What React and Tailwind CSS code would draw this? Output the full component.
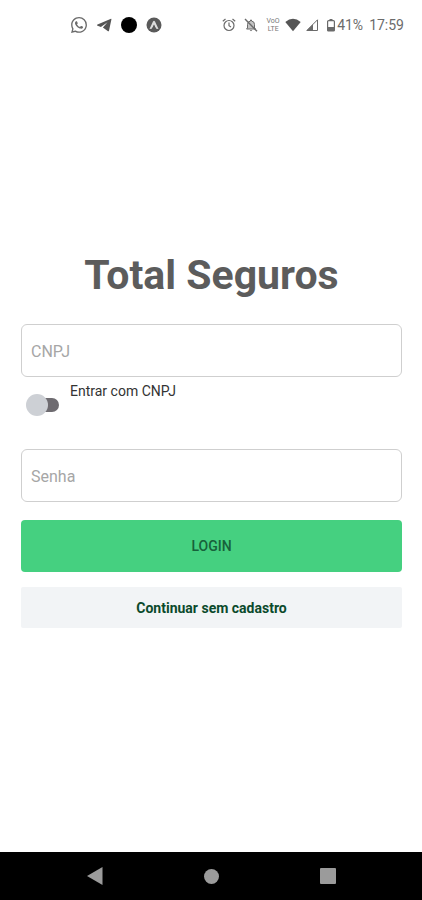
import { useState } from "react";

function StatusBar() {
  return (
    <header className="flex h-12 items-center justify-between pt-0.5 pr-[18px] pl-[71px] text-[#6b6b6b]">
      <div className="flex items-center gap-[9px]">
        <svg className="size-4" viewBox="0 0 24 24" fill="currentColor" aria-label="WhatsApp">
          <path d="M17.472 14.382c-.297-.149-1.758-.867-2.03-.967-.273-.099-.471-.148-.67.15-.197.297-.767.966-.94 1.164-.173.199-.347.223-.644.075-.297-.15-1.255-.463-2.39-1.475-.883-.788-1.48-1.761-1.653-2.059-.173-.297-.018-.458.13-.606.134-.133.298-.347.446-.52.149-.174.198-.298.298-.497.099-.198.05-.371-.025-.52-.075-.149-.669-1.612-.916-2.207-.242-.579-.487-.5-.669-.51-.173-.008-.371-.01-.57-.01-.198 0-.52.074-.792.372-.272.297-1.04 1.016-1.04 2.479 0 1.462 1.065 2.875 1.213 3.074.149.198 2.096 3.2 5.077 4.487.709.306 1.262.489 1.694.625.712.227 1.36.195 1.871.118.571-.085 1.758-.719 2.006-1.413.248-.694.248-1.289.173-1.413-.074-.124-.272-.198-.57-.347m-5.421 7.403h-.004a9.87 9.87 0 01-5.031-1.378l-.361-.214-3.741.982.998-3.648-.235-.374a9.86 9.86 0 01-1.51-5.26c.001-5.45 4.436-9.884 9.888-9.884a9.83 9.83 0 019.884 9.892c-.003 5.45-4.437 9.884-9.888 9.884m8.413-18.297A11.815 11.815 0 0012.05 0C5.495 0 .16 5.335.157 11.892c0 2.096.547 4.142 1.588 5.945L.057 24l6.305-1.654a11.882 11.882 0 005.683 1.448h.005c6.554 0 11.89-5.335 11.893-11.893a11.821 11.821 0 00-3.48-8.413z" />
        </svg>
        <svg className="size-4" viewBox="0 0 16 16" fill="#555" aria-label="Telegram">
          <path d="M15 1.800 1.500 7.600c-.7.300-.6.900.1 1.200l3.300 1.100L11.500 5.300 6.900 10.500 12 14.200c.5.300.9.100 1-.5L15.400 2.400c.1-.5-.1-.7-.4-.6Z" />
        </svg>
        <span className="size-4 rounded-full bg-black" />
        <svg className="size-4" viewBox="0 0 16 16" aria-label="App">
          <circle cx="8" cy="8" r="7.500" fill="#5a5a5a" />
          <path d="M3.500 12 7 4.500Q8 3 9 4.500L12.500 12 10.300 11.800 8 8 5.700 11.800Z" fill="#ddd" />
          <path d="M8 7.300 9.700 12H6.300Z" fill="#5a5a5a" />
        </svg>
      </div>
      <div className="flex items-center">
        <svg className="mr-1.5 size-4" viewBox="0 0 16 16" fill="none" stroke="currentColor" strokeWidth="1.200" aria-label="Alarme">
          <circle cx="8" cy="8.500" r="5" />
          <path d="M8 5.500v3.200l2 1.300M1.800 4.200 4.500 2M14.200 4.200 11.500 2" />
        </svg>
        <svg className="mr-1.5 size-4" viewBox="0 0 16 16" aria-label="Silencioso">
          <path d="M4.500 11V7.500a3.500 3.500 0 0 1 3-3.500V3h1v1a3.500 3.500 0 0 1 3 3.500V11l1 1h-9Z" fill="currentColor" fillOpacity="0.400" stroke="currentColor" />
          <path d="M6.700 13h2.600L8 14.300Z" fill="currentColor" />
          <path d="m2 2 12 12.300" stroke="currentColor" strokeWidth="1.400" />
        </svg>
        <span className="mr-1 flex w-4 flex-col items-center text-[7px] leading-[8px] text-[#777]">
          <span>VoO</span>
          <span>LTE</span>
        </span>
        <svg className="mr-1 size-4" viewBox="0 0 16 16" aria-label="Wi-Fi">
          <path d="M.3 5Q8-1.700 15.700 5L8 14.300Z" fill="#555" />
        </svg>
        <svg className="mr-[7px] size-3.5" viewBox="0 0 14 14" aria-label="Sinal">
          <path d="M12.500 1.800v10.700H1.800Z" fill="none" stroke="currentColor" />
          <path d="M8 6.300v6.200H1.800Z" fill="currentColor" />
        </svg>
        <svg className="mr-px h-3.5 w-2.5" viewBox="0 0 10 14" aria-label="Bateria">
          <path d="M3.500 1h3v1.500h-3Z" fill="currentColor" />
          <rect x="1.600" y="2.600" width="6.800" height="10.400" rx="1" fill="none" stroke="currentColor" strokeWidth="1.200" />
          <path d="M1.500 9h7v4h-7Z" fill="currentColor" />
        </svg>
        <span className="mr-1.5 text-sm">41%</span>
        <time className="text-sm">17:59</time>
      </div>
    </header>
  );
}

function Field({ label, type, value, onChange }) {
  return (
    <input
      type={type}
      aria-label={label}
      placeholder={label}
      value={value}
      onChange={(event) => onChange(event.target.value)}
      className="h-[53px] w-full rounded-md border border-[#cfcfcf] bg-white px-[9px] pt-0.5 text-base text-[#333] outline-none placeholder:text-[#a6a6a6]"
    />
  );
}

function NavigationBar() {
  return (
    <nav className="flex h-12 items-center justify-around bg-black px-9 text-[#9b9b9b]">
      <button type="button" aria-label="Voltar">
        <svg className="size-[18px]" viewBox="0 0 18 18" fill="currentColor">
          <path d="M16.500 0v18L1 9Z" />
        </svg>
      </button>
      <button type="button" aria-label="Início">
        <span className="block size-[15px] rounded-full bg-[#9b9b9b]" />
      </button>
      <button type="button" aria-label="Recentes">
        <span className="block size-4 rounded-[1px] bg-[#9b9b9b]" />
      </button>
    </nav>
  );
}

export default function App() {
  const [document, setDocument] = useState("");
  const [password, setPassword] = useState("");
  const [useCnpj, setUseCnpj] = useState(false);

  return (
    <div className="flex min-h-screen flex-col bg-white font-['Roboto',sans-serif]">
      <StatusBar />
      <main className="grow pt-[202px] pr-5 pl-[21px]">
        <form onSubmit={(event) => event.preventDefault()}>
          <h1 className="mb-6 text-center text-[41px] leading-[50px] font-bold text-[#5c5c5c]">Total Seguros</h1>
          <Field label="CNPJ" type="text" value={document} onChange={setDocument} />
          <div className="flex h-18 items-start pt-1 pl-[5px]">
            <input
              id="use-cnpj"
              type="checkbox"
              role="switch"
              checked={useCnpj}
              onChange={(event) => setUseCnpj(event.target.checked)}
              className="relative mt-[17px] h-3.5 w-[33px] appearance-none rounded-full bg-[#6e6b70] bg-clip-content pl-2 before:absolute before:-top-1 before:left-0 before:size-[22px] before:rounded-full before:bg-[#cdd0d5] checked:before:left-3"
            />
            <label htmlFor="use-cnpj" className="ml-[11px] text-sm leading-5 text-[#333]">
              Entrar com CNPJ
            </label>
          </div>
          <Field label="Senha" type="password" value={password} onChange={setPassword} />
          <button type="submit" className="mt-[18px] block h-13 w-full rounded bg-[#45d080] text-sm font-medium text-[#17613a]">
            LOGIN
          </button>
          <button type="button" className="mt-[15px] block h-[41px] w-full rounded-xs bg-[#f2f4f6] text-sm font-bold text-[#0b4a2c]">
            Continuar sem cadastro
          </button>
        </form>
      </main>
      <NavigationBar />
    </div>
  );
}
